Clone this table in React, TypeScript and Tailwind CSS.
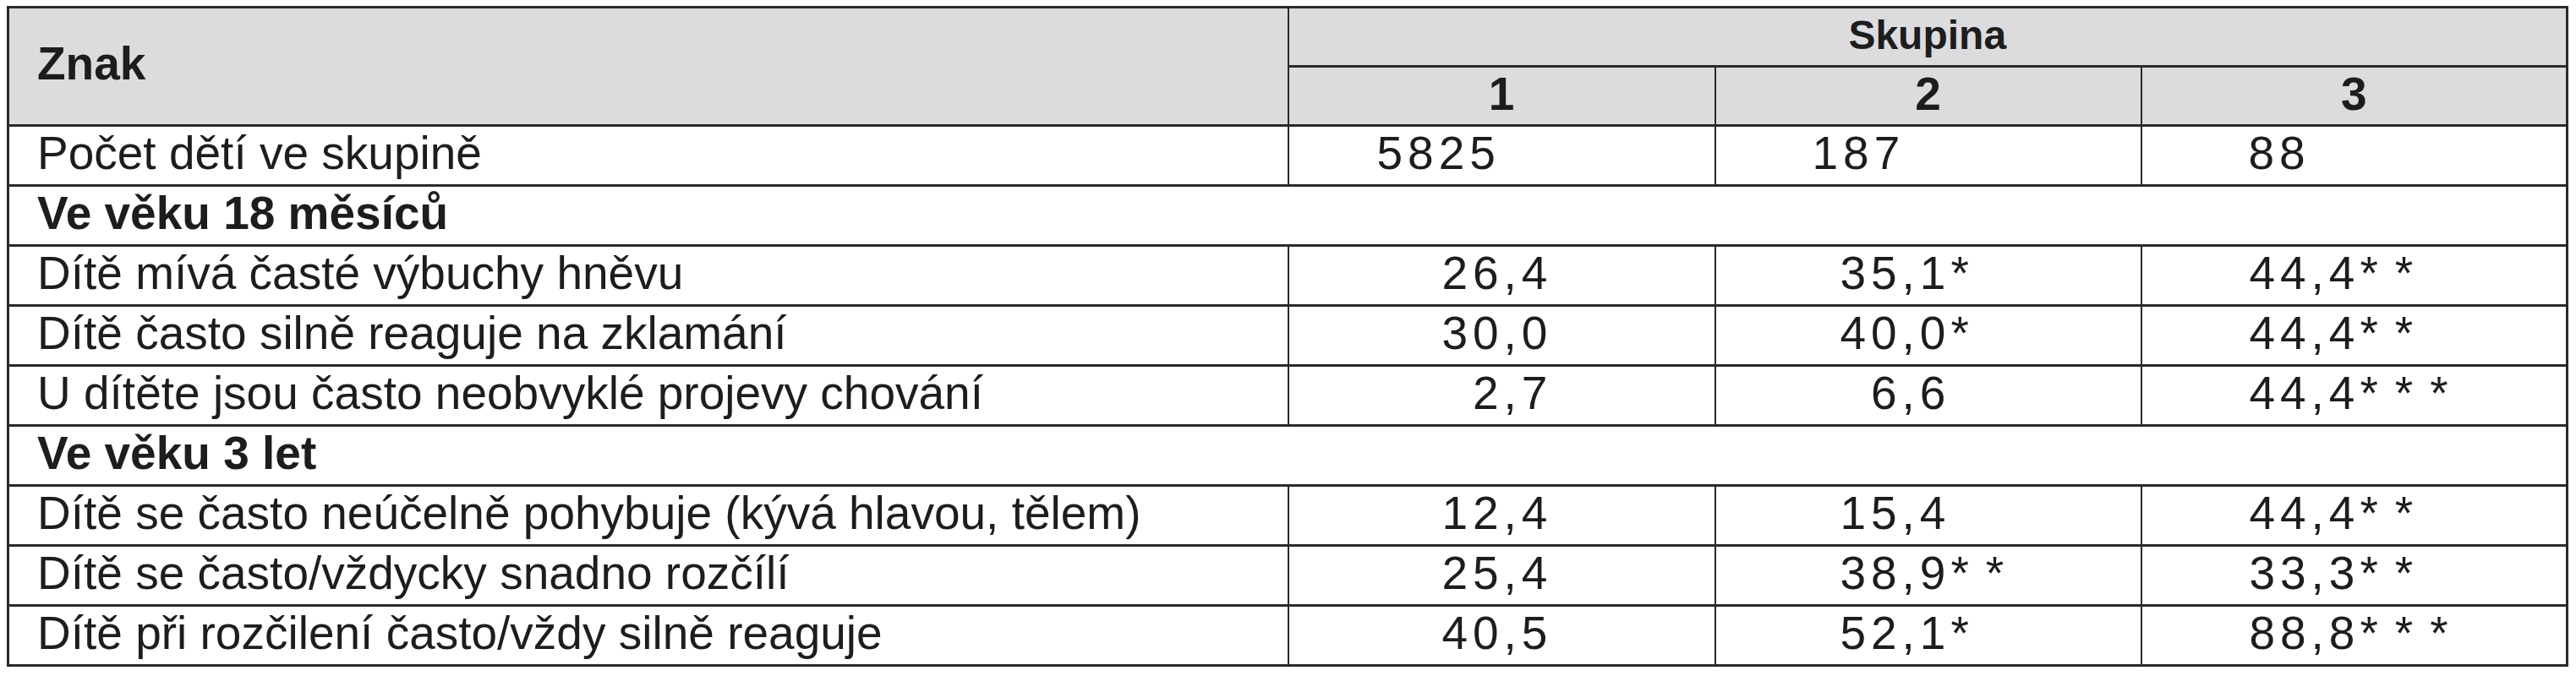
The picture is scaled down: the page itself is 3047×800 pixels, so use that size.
type Value = { int: string; rest: string; stars?: string };

type DataRow = { kind: "data"; label: string; values: [Value, Value, Value] };
type SectionRow = { kind: "section"; label: string };

const v = (s: string): Value => {
  const [int, dec] = s.replace(/\*+$/, "").split(",");
  const stars = (s.match(/\*+$/) || [""])[0];
  return { int, rest: "," + dec, stars };
};

const rows: (DataRow | SectionRow)[] = [
  { kind: "section", label: "Ve věku 18 měsíců" },
  { kind: "data", label: "Dítě mívá časté výbuchy hněvu", values: [v("26,4"), v("35,1*"), v("44,4**")] },
  { kind: "data", label: "Dítě často silně reaguje na zklamání", values: [v("30,0"), v("40,0*"), v("44,4**")] },
  { kind: "data", label: "U dítěte jsou často neobvyklé projevy chování", values: [v("2,7"), v("6,6"), v("44,4***")] },
  { kind: "section", label: "Ve věku 3 let" },
  { kind: "data", label: "Dítě se často neúčelně pohybuje (kývá hlavou, tělem)", values: [v("12,4"), v("15,4"), v("44,4**")] },
  { kind: "data", label: "Dítě se často/vždycky snadno rozčílí", values: [v("25,4"), v("38,9**"), v("33,3**")] },
  { kind: "data", label: "Dítě při rozčilení často/vždy silně reaguje", values: [v("40,5"), v("52,1*"), v("88,8***")] },
];

const cell = "border-x-2 border-y-[3px] border-[#2a2a2a] p-0 align-middle";
const valuePad = ["pl-[181px]", "pl-[147px]", "pl-[127px]"];

function Num({ value }: { value: Value }) {
  return (
    <div className="flex items-start whitespace-nowrap pb-[6px]">
      <span className="inline-block w-[73px] text-right tracking-[6px]">{value.int}</span>
      <span className="tracking-[6px]">{value.rest}</span>
      {value.stars ? <span className="tracking-[20px]">{value.stars}</span> : null}
    </div>
  );
}

export default function App() {
  return (
    <div className="min-h-[800px] bg-white pl-[8px] pt-[7px] font-['Liberation_Sans',Arial,sans-serif] text-[55px] leading-none text-[#1d1d1d]">
      <table className="w-[3027px] table-fixed border-collapse border-[3px] border-[#2a2a2a]">
        <colgroup>
          <col className="w-[1514px]" />
          <col className="w-[505px]" />
          <col className="w-[504px]" />
          <col className="w-[504px]" />
        </colgroup>
        <thead className="bg-[#dcdcdf]">
          <tr className="h-[70px]">
            <th rowSpan={2} className={`${cell} pl-[33px] text-left font-bold`}>
              <div className="pb-[6px]">Znak</div>
            </th>
            <th colSpan={3} className={`${cell} text-center text-[48px] font-bold`}>
              <div className="pb-[4px]">Skupina</div>
            </th>
          </tr>
          <tr className="h-[70px]">
            {["1", "2", "3"].map((n) => (
              <th key={n} className={`${cell} text-center font-bold`}>
                <div className="pb-[4px]">{n}</div>
              </th>
            ))}
          </tr>
        </thead>
        <tbody>
          <tr className="h-[71px]">
            <td className={`${cell} pl-[33px]`}>
              <div className="pb-[6px]">Počet dětí ve skupině</div>
            </td>
            <td className={`${cell} pl-[104px]`}>
              <div className="pb-[6px] tracking-[6px]">5825</div>
            </td>
            <td className={`${cell} pl-[114px]`}>
              <div className="pb-[6px] tracking-[6px]">187</div>
            </td>
            <td className={`${cell} pl-[126px]`}>
              <div className="pb-[6px] tracking-[6px]">88</div>
            </td>
          </tr>
          {rows.map((row) =>
            row.kind === "section" ? (
              <tr key={row.label} className="h-[71px]">
                <td colSpan={4} className={`${cell} pl-[33px] font-bold`}>
                  <div className="pb-[6px]">{row.label}</div>
                </td>
              </tr>
            ) : (
              <tr key={row.label} className="h-[71px]">
                <td className={`${cell} pl-[33px] whitespace-nowrap`}>
                  <div className="pb-[6px]">{row.label}</div>
                </td>
                {row.values.map((val, i) => (
                  <td key={i} className={`${cell} ${valuePad[i]}`}>
                    <Num value={val} />
                  </td>
                ))}
              </tr>
            ),
          )}
        </tbody>
      </table>
    </div>
  );
}
